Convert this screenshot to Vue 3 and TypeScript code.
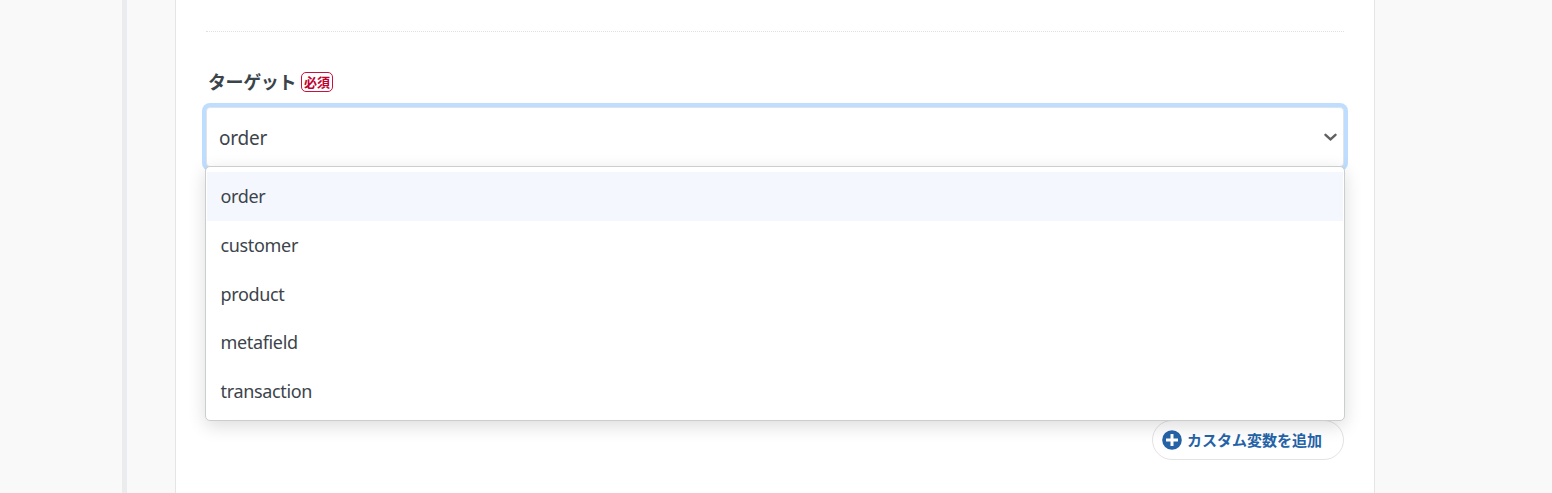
<script setup lang="ts">
import { ref } from 'vue'

const options: string[] = ['order', 'customer', 'product', 'metafield', 'transaction']
const selected = ref<string>('order')
</script>

<template>
  <div class="page">
    <div class="side"></div>
    <div class="rail"></div>
    <main class="card">
      <hr class="divider" />
      <div class="label">
        <span class="label-text">ターゲット</span>
        <span class="required">必須</span>
      </div>
      <div class="field">
        <div class="select">
          <span class="value">{{ selected }}</span>
          <svg class="chevron" width="14" height="10" viewBox="0 0 14 10">
            <path d="M2.5 2.8 L7.5 7.4 L12.5 2.8" fill="none" stroke="#606060" stroke-width="2.4" stroke-linecap="round" />
          </svg>
        </div>
        <ul class="menu">
          <li
            v-for="option in options"
            :key="option"
            class="option"
            :class="{ active: option === selected }"
            @click="selected = option"
          >{{ option }}</li>
        </ul>
      </div>
      <div class="actions">
        <button class="add" type="button">
          <svg width="20" height="20" viewBox="0 0 20 20">
            <circle cx="10" cy="10" r="9.8" fill="#2563a8" />
            <path d="M10 4V16M4 10H16" stroke="#fff" stroke-width="3" />
          </svg>
          <span class="add-text">カスタム変数を追加</span>
        </button>
      </div>
    </main>
  </div>
</template>

<style>
body {
  margin: 0;
  overflow: hidden;
  background: #f9f9f9;
}
</style>

<style scoped>
.page {
  display: flex;
  height: 493px;
  background: #f9f9f9;
  color: #3c444b;
  font-family: "Noto Sans", "Noto Sans CJK JP", sans-serif;
}
.side {
  width: 122px;
}
.rail {
  width: 5px;
  margin-right: 48px;
  background: #ebecee;
}
.card {
  box-sizing: border-box;
  width: 1200px;
  height: 493px;
  padding: 31px 30px 0;
  border: solid #e5e5e5;
  border-width: 0 1px;
  background: #fff;
}
.divider {
  margin: 0;
  border: 0;
  border-top: 1px dotted #e0e0e0;
}
.label {
  display: flex;
  align-items: center;
  height: 20px;
  margin: 40px 0 0 2px;
}
.label-text {
  width: 93px;
  padding-bottom: 2px;
  font: bold 18px/20px "Noto Sans CJK JP", sans-serif;
  letter-spacing: -0.4px;
  white-space: nowrap;
}
.required {
  box-sizing: border-box;
  width: 32px;
  height: 20px;
  border: 1px solid #c7113f;
  border-radius: 5px;
  color: #bf0030;
  font: bold 13px/18px "Noto Sans CJK JP", sans-serif;
  text-align: center;
  white-space: nowrap;
}
.field {
  position: relative;
  height: 60px;
  margin-top: 15px;
}
.select {
  box-sizing: border-box;
  display: flex;
  align-items: center;
  justify-content: space-between;
  height: 60px;
  padding: 2px 6px 0 12px;
  border: 1px solid #dfe3ea;
  border-radius: 4px;
  background: #fff;
  box-shadow: 0 0 0 4px #bfdeff;
  font-size: 19px;
  letter-spacing: -0.2px;
}
.chevron {
  margin-top: -2px;
}
.menu {
  position: absolute;
  z-index: 1;
  top: 59px;
  left: -1px;
  box-sizing: border-box;
  width: 1140px;
  height: 255px;
  margin: 0;
  padding: 5px 1px;
  border: 1px solid #cbcdcf;
  border-radius: 5px;
  background: #fff;
  box-shadow: 0 5px 18px rgba(0, 0, 0, 0.14);
  list-style: none;
}
.option {
  height: 48.75px;
  padding-left: 13.5px;
  font-size: 18px;
  line-height: 49px;
  letter-spacing: -0.34px;
}
.option.active {
  background: #f4f8fe;
}
.actions {
  display: flex;
  justify-content: flex-end;
  margin-top: 253px;
}
.add {
  box-sizing: border-box;
  display: flex;
  align-items: center;
  width: 192px;
  height: 40px;
  padding: 0 0 0 9px;
  border: 1px solid #e3e3e3;
  border-radius: 20px;
  background: #fff;
  color: #2563a8;
}
.add-text {
  margin-left: 5px;
  font: bold 15px/20px "Noto Sans CJK JP", sans-serif;
  white-space: nowrap;
}
</style>
